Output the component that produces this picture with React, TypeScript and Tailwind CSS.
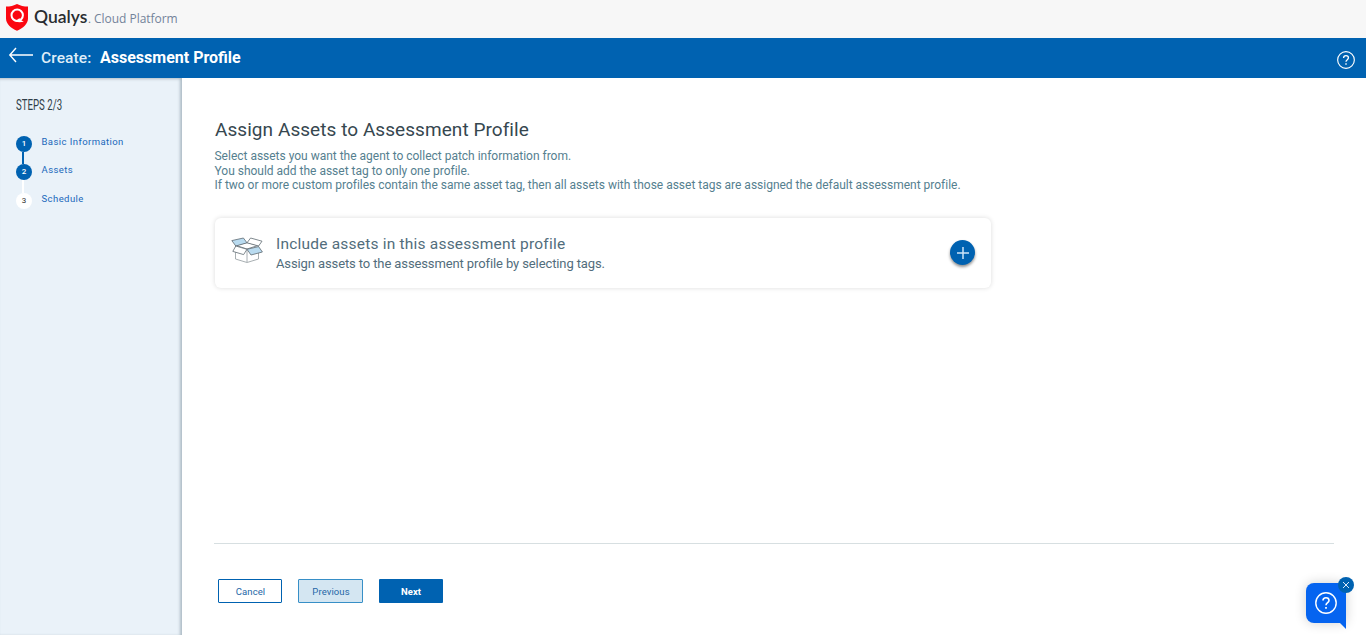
import React from "react";

const steps = [
  { n: 1, label: "Basic Information", done: true },
  { n: 2, label: "Assets", done: true },
  { n: 3, label: "Schedule", done: false },
];

function Shield() {
  return (
    <svg className="ml-1.5 mt-1 h-[27px] w-[22px] shrink-0" viewBox="0 0 22 27" fill="none">
      <path d="M11 0C14 1.7 18 2.6 22 2.6V14.5C22 20 17 24 11 26.8C5 24 0 20 0 14.5V2.6C4 2.6 8 1.7 11 0Z" fill="#fb0710" />
      <circle cx="11.2" cy="11.2" r="5.7" stroke="#fff" strokeWidth="2" />
      <path d="M6.4 14.8Q9.6 19.6 17.8 17.8Q14.8 16.8 13.4 14.2L10.4 16.2Z" fill="#fff" />
    </svg>
  );
}

function BoxIcon() {
  return (
    <svg className="h-[28px] w-[32px] shrink-0" viewBox="0 0 32 28" fill="none" stroke="#5f6b72" strokeWidth="0.8" strokeLinejoin="round">
      <path d="M4.5 9V23L16 26.5L27.5 23V9" stroke="#929a9e" fill="#fff" />
      <path d="M16 13V26" stroke="#929a9e" />
      <path d="M5 9.5L16 6.5L27 9.5L16 13Z" fill="#fff" />
      <path d="M0.8 4.6L12.4 2L16 6.8L4.8 10Z" fill="#b9dbf0" />
      <path d="M19.6 2L31 5.2L27.6 10L16 6.8Z" fill="#fff" />
      <path d="M4.8 10L16 13.3L12.6 18.6L1.8 15.4Z" fill="#fff" />
      <path d="M16 13.3L27.6 10.6L31.4 16L20 19Z" fill="#b9dbf0" />
    </svg>
  );
}

function HelpIcon({ className }: { className: string }) {
  return (
    <svg className={className} viewBox="0 0 22 22" fill="none" stroke="currentColor">
      <circle cx="11" cy="11" r="10.2" strokeWidth="1.4" />
      <path d="M8 8.6C8 4.7 14 4.9 14 8.4C14 10.5 11 10.7 11 13.2" strokeWidth="1.6" />
      <path d="M11 15V16.8" strokeWidth="1.7" />
    </svg>
  );
}

export default function App() {
  return (
    <div className="flex h-[635px] w-[1366px] flex-col overflow-hidden bg-white font-['Roboto',sans-serif]">
      <header className="flex h-[38px] shrink-0 bg-[#f7f7f7]">
        <Shield />
        <div className="ml-1.5 mt-[5px] flex items-baseline whitespace-nowrap leading-6">
          <span className="w-[54px] font-['Lato',sans-serif] text-[17.5px] font-semibold text-[#292d30]">Qualys</span>
          <span className="w-[6px] text-[12px] text-[#777]">.</span>
          <span className="font-['Open_Sans',sans-serif] text-[12px] tracking-[-0.03px] text-[#73839a]">Cloud Platform</span>
        </div>
      </header>

      <div className="flex h-[40px] shrink-0 bg-[#0062b1] text-white">
        <svg className="ml-2 mt-[9px] h-4 w-[26px]" viewBox="0 0 26 16" fill="none" stroke="currentColor" strokeWidth="1.4">
          <path d="M8 1L1.8 8L8 15M2 8H25" />
        </svg>
        <h1 className="ml-[7px] mt-[8px] flex whitespace-nowrap text-[16px] leading-6">
          <span className="w-[59px] text-[15.5px] font-medium tracking-[0.1px] text-[#dfedf8]">Create:</span>
          <span className="font-bold">Assessment Profile</span>
        </h1>
        <HelpIcon className="ml-auto mr-[11px] mt-[13px] h-[18px] w-[18px]" />
      </div>

      <div className="flex min-h-0 flex-1">
        <aside className="w-[182px] shrink-0 bg-[#eaf2f9] pl-4 pt-[18px] shadow-[inset_-2px_1px_3px_#aebbc5]">
          <div className="h-5 origin-left scale-x-[0.69] whitespace-nowrap text-[14px] leading-[18px] text-[#2f3e48]">STEPS 2/3</div>
          <ol className="mt-5">
            {steps.map((s) => (
              <li key={s.n} className={s.n === 1 ? "flex h-[28px] gap-[9.5px]" : "flex h-[29px] gap-[9.5px]"}>
                <div className="flex w-4 flex-col items-center">
                  <span className={s.done ? "flex h-4 w-4 shrink-0 items-center justify-center rounded-full bg-[#0062b1] text-[8px] font-medium text-white" : "flex h-4 w-4 shrink-0 items-center justify-center rounded-full bg-white text-[8px] text-[#333]"}>{s.n}</span>
                  {s.n < 3 && <span className={s.n === 1 ? "-ml-0.5 w-0.5 flex-1 bg-[#0062b1]" : "-ml-0.5 w-0.5 flex-1 bg-white"} />}
                </div>
                <span className="text-[9.5px] leading-3 tracking-[0.43px] text-[#2068bb]">{s.label}</span>
              </li>
            ))}
          </ol>
        </aside>

        <main className="flex flex-1 flex-col pl-8 pr-8">
          <h2 className="ml-px mt-[40px] h-6 whitespace-nowrap text-[19px] leading-6 tracking-[0.06px] text-[#36474f]">Assign Assets to Assessment Profile</h2>
          <div className="ml-[0.5px] mt-[7px] whitespace-nowrap text-[12px] leading-[14.5px] tracking-[-0.01px] text-[#55808f]">
            <p>Select assets you want the agent to collect patch information from.</p>
            <p>You should add the asset tag to only one profile.</p>
            <p>If two or more custom profiles contain the same asset tag, then all assets with those asset tags are assigned the default assessment profile.</p>
          </div>
          <section className="ml-px mt-[25px] flex h-[70px] w-[776px] rounded-md bg-white pl-4 pr-4 shadow-[0_0_5px_#00000024]">
            <div className="mt-[18px]"><BoxIcon /></div>
            <div className="ml-[13px] mt-[15px] whitespace-nowrap text-[#526d7c]">
              <h3 className="text-[15.5px] leading-[22px] tracking-[0.21px]">Include assets in this assessment profile</h3>
              <p className="text-[13px] leading-[18px] tracking-[-0.11px]">Assign assets to the assessment profile by selecting tags.</p>
            </div>
            <button className="ml-auto mt-[22px] flex h-[25px] w-[25px] items-center justify-center rounded-full bg-[#0062b1] shadow-[0_2px_3px_#00000070]">
              <svg className="mt-px h-3 w-3" viewBox="0 0 12 12" stroke="#cbe4f7" strokeWidth="1.5"><path d="M6 0V12M0 6H12" /></svg>
            </button>
          </section>
          <footer className="mt-auto flex h-[92px] gap-4 border-t border-[#d7dfe1] pl-1 pt-[35px] text-[9.5px] tracking-[0.1px]">
            <button className="h-[24px] w-[64px] rounded-[1px] border border-[#0062b1] bg-white pl-px pt-0.5 text-[#2467a7]">Cancel</button>
            <button className="h-[24px] w-[65px] rounded-[1px] border border-[#378fc7] bg-[#d4e6f2] pl-px pt-0.5 text-[#2467a7]">Previous</button>
            <button className="h-[24px] w-[64px] rounded-[1px] bg-[#0062b1] pt-0.5 font-bold tracking-normal text-white">Next</button>
          </footer>
        </main>
      </div>

      <button className="absolute left-[1306px] top-[583px] h-10 w-10 rounded-l-lg rounded-tr-lg bg-[#0564f0] text-white shadow-[0_0_12px_#00000030]">
        <HelpIcon className="absolute left-[9px] top-[9px] h-[22px] w-[22px]" />
        <svg className="absolute left-[33px] top-[39px] h-[7px] w-[7px]" viewBox="0 0 7 7"><path d="M0 0H7V7Z" fill="#0564f0" /></svg>
      </button>
      <button className="absolute left-[1338px] top-[577px] flex h-4 w-4 items-center justify-center rounded-full bg-[#0062b1]">
        <svg className="h-[6px] w-[6px]" viewBox="0 0 6 6" stroke="#d9eafa" strokeWidth="1"><path d="M0 0L6 6M6 0L0 6" /></svg>
      </button>
    </div>
  );
}
